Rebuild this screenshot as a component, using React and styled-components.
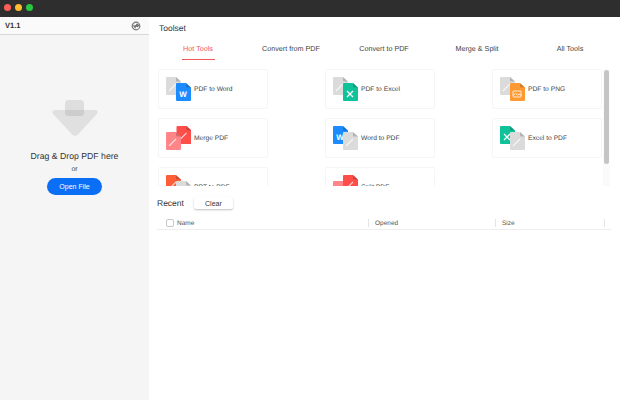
import * as React from 'react';
import styled, { createGlobalStyle } from 'styled-components';

const GREY = '#dbdbdb';
const TABS = ['Hot Tools', 'Convert from PDF', 'Convert to PDF', 'Merge & Split', 'All Tools'];

const TOOLS = [
  { name: 'PDF to Word', back: [GREY, 'pdf'], front: ['#1a8cff', 'w'] },
  { name: 'PDF to Excel', back: [GREY, 'pdf'], front: ['#0fc29a', 'x'] },
  { name: 'PDF to PNG', back: [GREY, 'pdf'], front: ['#ff9a33', 'img'] },
  { name: 'Merge PDF', back: ['#ff4d4a', 'pdf'], front: ['#ff8589', 'pdf'], swap: true },
  { name: 'Word to PDF', back: ['#1a8cff', 'w'], front: [GREY, 'pdf'] },
  { name: 'Excel to PDF', back: ['#0fc29a', 'x'], front: [GREY, 'pdf'] },
  { name: 'PPT to PDF', back: ['#ff5f38', 'pdf'], front: [GREY, 'pdf'] },
  { name: 'Split PDF', back: ['#ff8589', 'pdf'], front: ['#ff4d4a', 'pdf'], split: true },
];

function Glyph({ kind, x, y }) {
  const cx = x + 7;
  const cy = y + 11;
  if (kind === 'w') {
    return (
      <text x={cx} y={cy + 3} textAnchor="middle" fontSize="8" fontWeight="700" fill="#fff" fontFamily="Liberation Sans, sans-serif">
        W
      </text>
    );
  }
  if (kind === 'x') {
    return <path d={`M${cx - 3} ${cy - 3}l6 6m0-6l-6 6`} stroke="#fff" strokeWidth="1.3" fill="none" />;
  }
  if (kind === 'img') {
    return (
      <g stroke="#fff" strokeWidth="0.8" fill="none">
        <rect x={cx - 4} y={cy - 3} width="8" height="6" rx="0.6" />
        <path d={`M${cx - 4} ${cy + 1.5}l2.5-2 2 1.5 1.5-1 2.5 1.5`} />
      </g>
    );
  }
  return (
    <path
      d={`M${cx - 4} ${cy + 3}L${cx + 3} ${cy - 4}`}
      stroke="#fff"
      strokeOpacity="0.75"
      strokeWidth="1.1"
      fill="none"
    />
  );
}

function Doc({ color, glyph, x, y }) {
  return (
    <g>
      <path d={`M${x + 1} ${y}h9l5 4.5V${y + 17}a1 1 0 0 1-1 1H${x + 1}a1 1 0 0 1-1-1V${y + 1}a1 1 0 0 1 1-1z`} fill={color} />
      <path d={`M${x + 10} ${y}l5 4.5h-4a1 1 0 0 1-1-1z`} fill="#000" fillOpacity="0.18" />
      <Glyph kind={glyph} x={x} y={y} />
    </g>
  );
}

function ToolIcon({ back, front, swap, split }) {
  // swap: the darker page sits top right, pink page bottom left over it
  const backPos = swap ? { x: 10.5, y: 0 } : { x: 0, y: 0 };
  const frontPos = swap ? { x: 0, y: 6 } : { x: 10, y: 6 };
  if (split) {
    backPos.y = 6;
    frontPos.y = 0;
  }
  return (
    <IconSvg viewBox="0 0 25 25">
      <Doc color={back[0]} glyph={back[1]} {...backPos} />
      <Doc color={front[0]} glyph={front[1]} {...frontPos} />
    </IconSvg>
  );
}

export default function App() {
  return (
    <>
      <GlobalStyle />
      <Window>
        <TitleBar>
          <Light color="#ff5f57" />
          <Light color="#febc2e" />
          <Light color="#28c840" />
        </TitleBar>

        <Body>
          <Sidebar>
            <SideHeader>
              <Version>V1.1</Version>
              <svg width="10" height="10" viewBox="0 0 10 10">
                <circle cx="5" cy="5" r="3.8" fill="none" stroke="#777" strokeWidth="1.2" />
                <path d="M1.5 4.2h3l1-1.6 2 .6.8 1.6-1.6 1.4-1.6-.4-.8 2L3 6z" fill="#777" />
              </svg>
            </SideHeader>

            <DropZone>
              <DropArrow viewBox="0 0 46 36">
                <path
                  d="M3 10h40c2.4 0 3.4 2 1.8 3.9L26 34.4c-1.7 1.8-4.3 1.8-6 0L1.2 13.9C-.4 12 .6 10 3 10z"
                  fill="#e0e0e0"
                />
                <rect x="13" y="0" width="19" height="16" rx="3.5" fill="#dedede" />
                <path d="M13 10h19v2.5a3.5 3.5 0 0 1-3.5 3.5h-12a3.5 3.5 0 0 1-3.5-3.5z" fill="#cdcdcd" />
              </DropArrow>
              <DropTitle>Drag &amp; Drop PDF here</DropTitle>
              <DropOr>or</DropOr>
              <OpenButton>Open File</OpenButton>
            </DropZone>
          </Sidebar>

          <Main>
            <Heading>Toolset</Heading>

            <Tabs>
              {TABS.map((tab, i) => (
                <Tab key={tab}>
                  <TabLabel $active={i === 0}>{tab}</TabLabel>
                </Tab>
              ))}
            </Tabs>

            <ToolArea>
              <ToolGrid>
                {TOOLS.map((tool) => (
                  <ToolCard key={tool.name}>
                    <ToolIcon {...tool} />
                    <ToolName>{tool.name}</ToolName>
                  </ToolCard>
                ))}
              </ToolGrid>
              <ScrollTrack>
                <ScrollThumb />
              </ScrollTrack>
            </ToolArea>

            <RecentBar>
              <RecentTitle>Recent</RecentTitle>
              <ClearButton>Clear</ClearButton>
            </RecentBar>

            <TableHead>
              <NameCol>
                <Check />
                <ColText>Name</ColText>
              </NameCol>
              <OpenedCol>
                <ColText>Opened</ColText>
              </OpenedCol>
              <SizeCol>
                <ColText>Size</ColText>
              </SizeCol>
            </TableHead>
          </Main>
        </Body>
      </Window>
    </>
  );
}

const GlobalStyle = createGlobalStyle`
  html, body {
    margin: 0;
    background: #fff;
  }
  * {
    box-sizing: border-box;
  }
`;

const Window = styled.div`
  width: 620px;
  height: 400px;
  display: flex;
  flex-direction: column;
  overflow: hidden;
  font-family: "Liberation Sans", Arial, sans-serif;
  text-rendering: geometricPrecision;
  color: #333;
`;

const TitleBar = styled.div`
  flex: 0 0 17px;
  display: flex;
  align-items: center;
  gap: 4px;
  padding: 0 0 3px 4px;
  background: #2e2e2e;
`;

const Light = styled.span`
  width: 7px;
  height: 7px;
  border-radius: 50%;
  background: ${({ color }) => color};
`;

const Body = styled.div`
  flex: 1;
  display: flex;
  min-height: 0;
`;

const Sidebar = styled.aside`
  flex: 0 0 149px;
  display: flex;
  flex-direction: column;
  background: #f5f5f5;
`;

const SideHeader = styled.div`
  flex: 0 0 18px;
  display: flex;
  align-items: center;
  justify-content: space-between;
  padding: 0 8px 0 5px;
  background: #fafafa;
  border-bottom: 1px solid #d8d8d8;
`;

const Version = styled.span`
  font-size: 7.5px;
  font-weight: 700;
  color: #333;
`;

const DropZone = styled.div`
  display: flex;
  flex-direction: column;
  align-items: center;
  padding-top: 65px;
`;

const DropArrow = styled.svg`
  width: 46px;
  height: 36px;
`;

const DropTitle = styled.div`
  margin-top: 14px;
  font-size: 8.7px;
  line-height: 12px;
  color: #333;
`;

const DropOr = styled.div`
  margin-top: 3px;
  font-size: 7px;
  line-height: 9px;
  color: #444;
`;

const OpenButton = styled.button`
  margin-top: 4px;
  width: 55px;
  height: 17px;
  padding: 0;
  border: 0;
  border-radius: 9px;
  background: #0a6ff5;
  color: #fff;
  font-family: inherit;
  font-size: 7px;
  font-weight: 500;
`;

const Main = styled.main`
  flex: 1;
  min-width: 0;
  display: flex;
  flex-direction: column;
  background: #fff;
`;

const Heading = styled.div`
  padding: 6px 0 0 10px;
  font-size: 8.5px;
  line-height: 11px;
  color: #333;
`;

const Tabs = styled.div`
  display: grid;
  grid-template-columns: repeat(5, 93px);
  margin: 10px 0 0 2.5px;
`;

const Tab = styled.div`
  display: flex;
  justify-content: center;
`;

const TabLabel = styled.span`
  padding: 0 1px 5px;
  min-width: 33px;
  text-align: center;
  font-size: 7.2px;
  line-height: 10px;
  color: ${({ $active }) => ($active ? '#f0585a' : '#444')};
  border-bottom: 1px solid ${({ $active }) => ($active ? '#f0585a' : 'transparent')};
`;

const ToolArea = styled.div`
  flex: 0 0 117px;
  margin-top: 9px;
  display: flex;
  overflow: hidden;
`;

const ToolGrid = styled.div`
  margin-left: 9px;
  display: grid;
  grid-template-columns: repeat(3, 110px);
  grid-auto-rows: 40px;
  column-gap: 57px;
  row-gap: 9px;
  flex: 0 0 auto;
`;

const ToolCard = styled.div`
  display: flex;
  align-items: center;
  gap: 3px;
  padding: 0 0 0 7px;
  border: 1px solid #f5f5f5;
  border-radius: 2px;
`;

const IconSvg = styled.svg`
  flex: 0 0 25px;
  width: 25px;
  height: 25px;
`;

const ToolName = styled.span`
  font-size: 6.7px;
  color: #444;
  white-space: nowrap;
`;

const ScrollTrack = styled.div`
  margin-left: 1px;
  width: 7px;
  padding: 1px 1px;
  background: #fafafa;
`;

const ScrollThumb = styled.div`
  width: 5px;
  height: 94px;
  border-radius: 3px;
  background: #c4c4c4;
`;

const RecentBar = styled.div`
  display: flex;
  align-items: center;
  gap: 10px;
  margin: 11px 0 0 8px;
`;

const RecentTitle = styled.span`
  font-size: 8.5px;
  color: #333;
`;

const ClearButton = styled.button`
  width: 39px;
  height: 12px;
  padding: 0;
  border: 0;
  border-radius: 2px;
  background: #fff;
  box-shadow: 0 1px 2px rgba(0, 0, 0, 0.25);
  font-family: inherit;
  font-size: 7px;
  color: #333;
`;

const TableHead = styled.div`
  margin: 7px 9px 0 8px;
  height: 14px;
  display: grid;
  grid-template-columns: 211px 127px 110px;
  align-items: center;
  border-bottom: 1px solid #eee;
  font-size: 6.5px;
  color: #555;
`;

const ColText = styled.span`
  display: block;
  padding-top: 1px;
  line-height: 8px;
`;

const NameCol = styled.div`
  display: flex;
  align-items: flex-start;
  gap: 3px;
  height: 8px;
  padding-left: 9px;
`;

const OpenedCol = styled.div`
  height: 8px;
  padding-left: 6px;
  border-left: 1px solid #e4e4e4;
`;

const SizeCol = styled(OpenedCol)`
  padding-left: 6px;
  border-right: 1px solid #e4e4e4;
`;

const Check = styled.span`
  flex: 0 0 8px;
  width: 8px;
  height: 8px;
  border: 1px solid #c8c8c8;
  border-radius: 2px;
  background: #fff;
`;
